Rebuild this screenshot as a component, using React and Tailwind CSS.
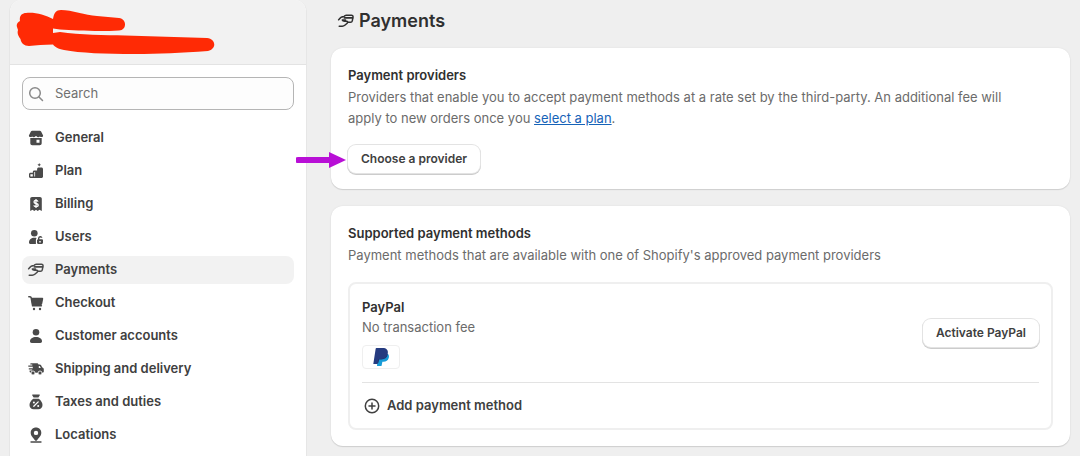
import React, { useState } from "react";

const Icon = ({ name, className }) => (
  <svg viewBox="0 0 20 20" fill="currentColor" aria-hidden="true" className={className}>
    {icons[name]}
  </svg>
);

const icons = {
  store: (
    <>
      <path d="M6.2 2.8h7.6c.5 0 1 .3 1.300.7L17 7.200c.2.400.2.900-.1 1.200-.8.900-2.200.900-3 0-.9 1-2.400 1-3.200 0l-.7-.7-.7.700c-.8 1-2.300 1-3.200 0-.8.900-2.200.900-3 0-.3-.3-.3-.8-.1-1.200l1.900-3.700c.3-.4.800-.7 1.300-.7z" />
      <path fillRule="evenodd" d="M4.300 10h11.400v5.200c0 1.100-.9 2-2 2H6.300c-1.100 0-2-.9-2-2V10zm6.200 1.800v3h3v-3h-3z" />
    </>
  ),
  plan: (
    <>
      <path d="M13.200 2l.6 1.200 1.200.6-1.200.6-.6 1.200-.6-1.200-1.200-.6 1.200-.6z" />
      <path fillRule="evenodd" d="M12.600 6.500h2.900c.8 0 1.500.7 1.500 1.500v7.500c0 .8-.7 1.500-1.500 1.500h-11c-.8 0-1.500-.7-1.500-1.500v-2.300c0-.8.7-1.500 1.500-1.500h2.300V11c0-.8.7-1.500 1.500-1.500h2.800V8c0-.8.7-1.500 1.500-1.500zM4.400 13.200v2.300h2.400v-2.300H4.400zm3.900-2.200v4.500h.8V11h-.8z" />
    </>
  ),
  billing: (
    <>
      <path d="M6 3h8c1 0 1.800.8 1.800 1.800V17l-2.300-1.300L11.700 17 10 15.700 8.300 17l-1.800-1.300L4.200 17V4.800C4.200 3.800 5 3 6 3z" />
      <path d="M12 7.600c-.2-.8-1-1.200-2-1.200-1.200 0-2 .6-2 1.500 0 2.300 4.200.9 4.200 3.200 0 1-.9 1.600-2.200 1.600-1.100 0-2-.5-2.200-1.300M10 5v9" fill="none" stroke="#fff" strokeWidth="1.300" />
    </>
  ),
  users: (
    <>
      <circle cx="8.300" cy="6.300" r="3.300" />
      <path d="M3 15.500c0-3 2.300-4.800 5.300-4.800 1 0 1.700.1 2.300.4-.5.5-.7 1.200-.7 2V17H4.500c-.9 0-1.500-.6-1.500-1.500z" />
      <path fillRule="evenodd" d="M12 12.300v-1a2.300 2.300 0 0 1 4.500-.6h-1.600a1 1 0 0 0-1.500.7v.9h2.300c.8 0 1.300.5 1.300 1.300v2.200c0 .7-.5 1.200-1.300 1.200h-3.400c-.8 0-1.300-.5-1.300-1.200v-2.200c0-.7.400-1.200 1-1.300zm1.300 1.800v1.300h1.400v-1.300z" />
    </>
  ),
  payments: (
    <g fill="none" stroke="currentColor" strokeWidth="1.500" strokeLinecap="round" strokeLinejoin="round">
      <path d="M2.600 8.800C4 6.700 5.600 5.700 8 5.500L9 4.700c.4-.4.800-.5 1.300-.5h5.200c1 0 1.700.7 1.500 1.700l-.7 3.900c-.2.900-.9 1.500-1.800 1.500h-3" />
      <path d="M8.500 6.900h8" strokeWidth="1.900" />
      <path d="M9.500 9H6.300c.3 1 1.200 1.300 2.300 1.300h2c1.100 0 1.400 1.200.6 1.900l-2.400 2.100c-.8.700-1.600.9-2.500.9H3.200" />
    </g>
  ),
  cart: (
    <>
      <path d="M2.800 3.700h1.200c.7 0 1.100.4 1.200 1.100l1.400 8h8.800" fill="none" stroke="currentColor" strokeWidth="1.500" strokeLinecap="round" />
      <path d="M5 4.800h11.200c.7 0 1.200.6 1 1.300l-1 4.600c-.1.800-.8 1.300-1.600 1.300H6.200z" />
      <circle cx="8" cy="16" r="1.200" />
      <circle cx="14" cy="16" r="1.200" />
    </>
  ),
  person: (
    <>
      <circle cx="10" cy="6.300" r="3.300" />
      <path d="M4 15.300c0-2.600 2.600-4.300 6-4.300s6 1.700 6 4.300c0 1-.7 1.700-1.700 1.700H5.700C4.700 17 4 16.300 4 15.300z" />
    </>
  ),
  truck: (
    <>
      <path fillRule="evenodd" d="M5 4.300h5.800c.9 0 1.500.4 1.700 1.200h1.200c.6 0 1.100.3 1.400.8l1 2 1.100.7c.4.300.6.700.6 1.200v2.400c0 .7-.5 1.200-1.200 1.200H4.800c-.7 0-1.200-.5-1.200-1.200v-1h2.600V10.400H2.800V9.200h4V7.800H2.300V6.500h4V5.500H4.300c0-.7.2-1.200.7-1.200zm7.800 2.700v2h2l-.9-1.700c-.1-.2-.3-.3-.5-.3z" />
      <circle cx="7" cy="14" r="2" stroke="#fff" strokeWidth=".8" />
      <circle cx="14" cy="14" r="2" stroke="#fff" strokeWidth=".8" />
    </>
  ),
  taxes: (
    <>
      <path d="M6.800 2.500h6.400c.5 0 .8.500.5.900L12.400 5.600H7.600L6.300 3.400c-.3-.4 0-.9.500-.9z" />
      <path d="M7.300 6.700h5.400c2.300 1.600 3.800 4 3.800 6.400 0 2.700-1.700 4.200-4.200 4.200H7.700c-2.500 0-4.200-1.500-4.200-4.200 0-2.400 1.500-4.800 3.800-6.400z" />
      <path d="M7.800 14.300l4.400-4.400" stroke="#fff" strokeWidth="1.300" strokeLinecap="round" />
      <circle cx="7.900" cy="10.500" r="1" fill="#fff" />
      <circle cx="12.200" cy="13.900" r="1" fill="#fff" />
    </>
  ),
  location: (
    <>
      <path fillRule="evenodd" d="M10 2.500c3 0 5.300 2.200 5.300 5.200 0 3.300-2.700 5-4.300 7.600-.5.800-1.500.8-2 0-1.600-2.600-4.300-4.300-4.300-7.600 0-3 2.300-5.200 5.300-5.200zm0 3.200a2.200 2.200 0 1 0 0 4.400 2.200 2.200 0 0 0 0-4.400z" />
      <path d="M5 17h10" stroke="currentColor" strokeWidth="1.300" strokeLinecap="round" />
    </>
  ),
  search: (
    <g fill="none" stroke="currentColor" strokeWidth="1.500" strokeLinecap="round">
      <circle cx="9" cy="9" r="5.300" />
      <path d="M13 13l3.500 3.500" />
    </g>
  ),
  plus: (
    <g fill="none" stroke="currentColor" strokeWidth="1.500" strokeLinecap="round">
      <circle cx="10" cy="10" r="6.700" />
      <path d="M10 7v6M7 10h6" />
    </g>
  ),
};

const navItems = [
  { label: "General", icon: "store" },
  { label: "Plan", icon: "plan" },
  { label: "Billing", icon: "billing" },
  { label: "Users", icon: "users" },
  { label: "Payments", icon: "payments" },
  { label: "Checkout", icon: "cart" },
  { label: "Customer accounts", icon: "person" },
  { label: "Shipping and delivery", icon: "truck" },
  { label: "Taxes and duties", icon: "taxes" },
  { label: "Locations", icon: "location" },
];

const Sidebar = ({ active, onSelect }) => {
  const [query, setQuery] = useState("");

  return (
    <aside className="w-[298px] shrink-0 bg-white rounded-t-xl border-x border-[#e6e6e6] overflow-hidden">
      <div className="h-[65px] bg-[#f2f2f2] border-b border-[#e3e3e3] pl-1.5 pt-2">
        <svg viewBox="16 8 200 48" className="w-[200px] h-12" fill="#ff2a05" aria-hidden="true">
          <path d="M17 27C16 24 18 22 20 21C19 16 22 13 26 13C35 12 45 15 53 19C54 13 56 10 61 10C72 10 85 15 97 16L119 18C127 19 127 30 119 30.500C95 32 75 30 60 29.500L53 28.500V33L60 32C80 35 105 35 125 35.500L207 38C216 39 217 49 208 51C180 53 160 54 135 54C105 54 80 53 64 50C58 49 55 47 53 44.500C44 45 36 45 29 46C24 46 21 43 20.500 39C18 36 17 33 18 30Z" />
        </svg>
      </div>
      <div className="px-3 pt-3 pb-3.5">
        <div className="flex items-center gap-[9px] h-[33px] pl-[3px] pr-2 border border-[#b5b5b5] rounded-lg bg-[#fdfdfd]">
          <label htmlFor="settings-search" className="text-[#8a8a8a]">
            <Icon name="search" className="size-5" />
          </label>
          <input
            id="settings-search"
            type="text"
            aria-label="Search"
            value={query}
            onChange={(e) => setQuery(e.target.value)}
            placeholder="Search"
            className="flex-1 min-w-0 bg-transparent text-[13px] outline-none placeholder:text-[#707070]"
          />
        </div>
      </div>
      <nav className="px-3">
        <ul className="flex flex-col gap-[5px]">
          {navItems.map((item) => (
            <li key={item.label}>
              <a
                href="#"
                onClick={(e) => {
                  e.preventDefault();
                  onSelect(item.label);
                }}
                className={`flex items-center gap-[9px] h-7 pl-1 rounded-lg text-[13px] font-semibold text-[#404040] ${
                  active === item.label ? "bg-[#f2f2f2]" : "hover:bg-[#f7f7f7]"
                }`}
              >
                <Icon name={item.icon} className="size-5 text-[#4a4a4a]" />
                {item.label}
              </a>
            </li>
          ))}
        </ul>
      </nav>
    </aside>
  );
};

const Card = ({ title, children }) => (
  <section className="bg-white rounded-xl px-[17px] pt-[17px] pb-4 shadow-[0_1px_1px_rgba(0,0,0,0.12),0_0_2px_rgba(0,0,0,0.08)]">
    <h2 className="text-[13px] leading-5 font-semibold text-[#303030]">{title}</h2>
    {children}
  </section>
);

const Button = ({ children }) => (
  <button
    type="button"
    className="h-7 px-[13px] rounded-lg bg-white text-[12px] font-semibold text-[#404040] whitespace-nowrap shadow-[0_0_0_1px_#e3e3e3,0_1px_0_1px_#cccccc]"
  >
    {children}
  </button>
);

const PayPalLogo = () => (
  <svg viewBox="0 0 16 18" className="w-4 h-[18px]" role="img" aria-label="PayPal">
    <path fill="#179bd7" d="M5 6h10c1 1 1.200 2.500.7 4-.7 2.600-2.600 3.700-5.200 3.700H9.400L8.500 18H4z" />
    <path fill="#222d65" d="M5.500 5.500l7.500.3 1.700.8c-.7 3.400-3 4.900-6.400 4.900H6.200l-1 3.500H4z" />
    <path fill="#253b80" d="M3.400 0h6.300c3.600 0 5.700 1.900 5.100 5.400-.7 3.700-3.300 5.500-7 5.500H5.600L4.700 16H.3L2.700.6c.1-.4.300-.6.700-.6z" />
  </svg>
);

export default function App() {
  const [active, setActive] = useState("Payments");

  return (
    <div className="min-h-screen flex gap-6 pl-[9px] pr-[10px] bg-[#efefef] text-[#303030] font-['Inter','Liberation_Sans',sans-serif]">
      <Sidebar active={active} onSelect={setActive} />

      <main className="flex-1 min-w-0 pb-[10px]">
        <div className="flex items-center h-12 pl-[5px] pb-[7px]">
          <Icon name="payments" className="size-5" />
          <h1 className="pl-[3px] text-[18px] font-semibold">Payments</h1>
        </div>

        <div className="flex flex-col gap-[17px]">
          <Card title="Payment providers">
            <p className="mt-0.5 pr-6 text-[13px] leading-[21px] text-[#6b6b6b]">
              Providers that enable you to accept payment methods at a rate set by the third-party. An additional fee will
              apply to new orders once you{" "}
              <a href="#" className="text-[#1663b8] underline">select a plan</a>.
            </p>
            <div className="relative w-fit mt-4">
              <Button>Choose a provider</Button>
              <svg viewBox="0 0 52 18" className="absolute right-full top-1.5 w-[52px] h-[18px]" fill="#b80fd6" aria-hidden="true">
                <path d="M2 6h31V1l17 8-17 8v-5H2a3 3 0 0 1 0-6z" />
              </svg>
            </div>
          </Card>

          <Card title="Supported payment methods">
            <p className="mt-0.5 text-[13px] leading-[21px] text-[#6b6b6b]">
              Payment methods that are available with one of Shopify's approved payment providers
            </p>
            <div className="mt-4 px-3 border-2 border-[#efefef] rounded-lg">
              <div className="flex items-center justify-between py-[13px] border-b border-[#e3e3e3]">
                <div>
                  <h3 className="text-[13px] leading-5 font-semibold">PayPal</h3>
                  <p className="text-[13px] leading-5 text-[#6b6b6b]">No transaction fee</p>
                  <div className="mt-2 flex items-center justify-center w-[38px] h-6 border border-[#efefef] rounded-sm">
                    <PayPalLogo />
                  </div>
                </div>
                <Button>Activate PayPal</Button>
              </div>
              <button type="button" className="flex items-center gap-[5px] h-[45px] text-[13px] font-semibold text-[#404040]">
                <Icon name="plus" className="size-5" />
                Add payment method
              </button>
            </div>
          </Card>
        </div>
      </main>
    </div>
  );
}
